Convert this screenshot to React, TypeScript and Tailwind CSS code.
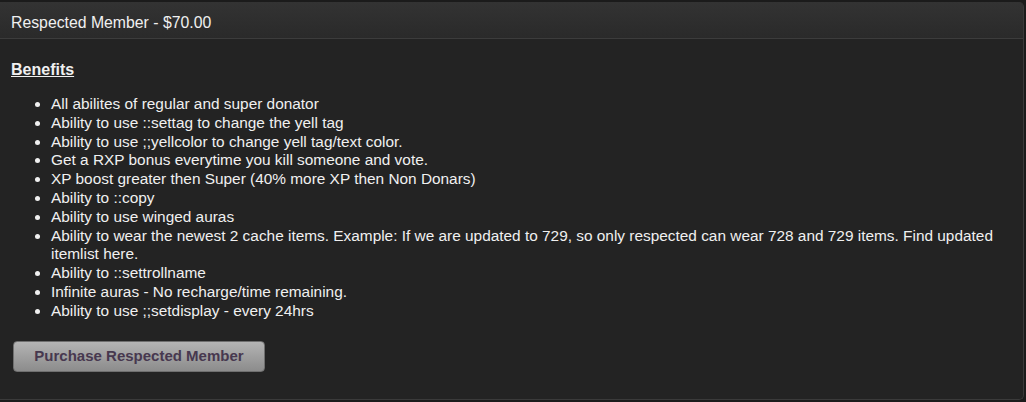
const benefits = [
  'All abilites of regular and super donator',
  'Ability to use ::settag to change the yell tag',
  'Ability to use ;;yellcolor to change yell tag/text color.',
  'Get a RXP bonus everytime you kill someone and vote.',
  'XP boost greater then Super (40% more XP then Non Donars)',
  'Ability to ::copy',
  'Ability to use winged auras',
  'Ability to wear the newest 2 cache items. Example: If we are updated to 729, so only respected can wear 728 and 729 items. Find updated itemlist here.',
  'Ability to ::settrollname',
  'Infinite auras - No recharge/time remaining.',
  'Ability to use ;;setdisplay - every 24hrs',
]

export default function App() {
  return (
    <div className="min-h-screen bg-[#1b1b1b] pt-[2px] pr-[2px] pb-[2px] font-['Liberation_Sans',Arial,sans-serif]">
      <div className="h-[398px] overflow-hidden rounded-r-[5px] border-r border-b border-[#3a3a3a] bg-[#232323]">
        <div className="h-[37px] border-b border-[#3c3c3c] bg-gradient-to-b from-[#333333] to-[#2a2a2a] pl-[11px] pt-[12px] text-[15.8px] leading-[18px] text-[#f0f0f0]">
          Respected Member - $70.00
        </div>
        <div className="px-[11px] pt-[22px] text-[15.4px] text-[#f0f0f0]">
          <h3 className="font-bold underline text-[16px] leading-[18px]">Benefits</h3>
          <ul className="mt-[16px] list-disc pl-[40px] pr-[6px] leading-[18.8px]">
            {benefits.map((b) => (
              <li key={b}>{b}</li>
            ))}
          </ul>
          <button className="mt-[20px] ml-[2px] h-[31px] w-[252px] rounded-[4px] border border-[#6f6f6f] bg-gradient-to-b from-[#b4b4b4] to-[#8c8c8c] text-[15px] font-bold text-[#47384f]">
            Purchase Respected Member
          </button>
        </div>
      </div>
    </div>
  )
}
